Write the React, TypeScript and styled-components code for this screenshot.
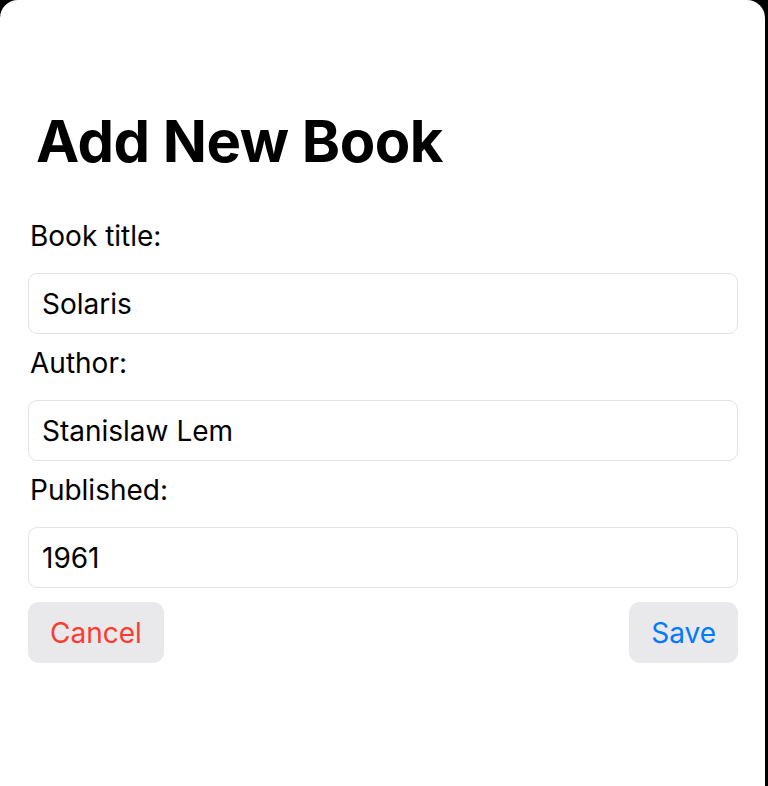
import React from "react";
import styled, { createGlobalStyle } from "styled-components";

const GlobalStyle = createGlobalStyle`
  html, body {
    margin: 0;
    padding: 0;
    background: #000;
    font-family: Inter, "Noto Sans", "Liberation Sans", sans-serif;
  }
`;

const Screen = styled.div`
  width: 768px;
  height: 786px;
  background: #000;
  overflow: hidden;
`;

const Sheet = styled.div`
  width: 765px;
  height: 786px;
  background: #fff;
  border-radius: 18px 18px 0 0;
  box-sizing: border-box;
  padding: 105px 27px 0 28px;
`;

const Title = styled.h1`
  margin: 0 0 0 8px;
  font-size: 58px;
  font-weight: 700;
  line-height: 72px;
  color: #000;
  letter-spacing: -0.5px;
`;

const Form = styled.form`
  display: flex;
  flex-direction: column;
  margin-top: 42px;
`;

const Label = styled.label`
  display: block;
  font-size: 28px;
  line-height: 34px;
  color: #000;
  padding: 0 0 20px 2px;
`;

const Field = styled.input`
  box-sizing: border-box;
  width: 100%;
  height: 61px;
  border: 1px solid #e3e3e6;
  border-radius: 9px;
  padding: 0 13px;
  font-family: inherit;
  font-size: 28px;
  color: #000;
  background: #fff;
  outline: none;
  margin-bottom: 12px;
`;

const Actions = styled.div`
  display: flex;
  justify-content: space-between;
  margin-top: 2px;
`;

const Button = styled.button<{ $tone: "cancel" | "save" }>`
  height: 61px;
  padding: 0 22px;
  border: none;
  border-radius: 11px;
  background: #e9e9eb;
  font-family: inherit;
  font-size: 28px;
  color: ${({ $tone }) => ($tone === "cancel" ? "#ff3b30" : "#007aff")};
  cursor: pointer;
`;

const fields = [
  { label: "Book title:", value: "Solaris" },
  { label: "Author:", value: "Stanislaw Lem" },
  { label: "Published:", value: "1961" },
];

export default function App() {
  return (
    <Screen>
      <GlobalStyle />
      <Sheet>
        <Title>Add New Book</Title>
        <Form onSubmit={(e) => e.preventDefault()}>
          {fields.map((f) => (
            <React.Fragment key={f.label}>
              <Label>{f.label}</Label>
              <Field defaultValue={f.value} />
            </React.Fragment>
          ))}
          <Actions>
            <Button type="button" $tone="cancel">Cancel</Button>
            <Button type="submit" $tone="save">Save</Button>
          </Actions>
        </Form>
      </Sheet>
    </Screen>
  );
}
